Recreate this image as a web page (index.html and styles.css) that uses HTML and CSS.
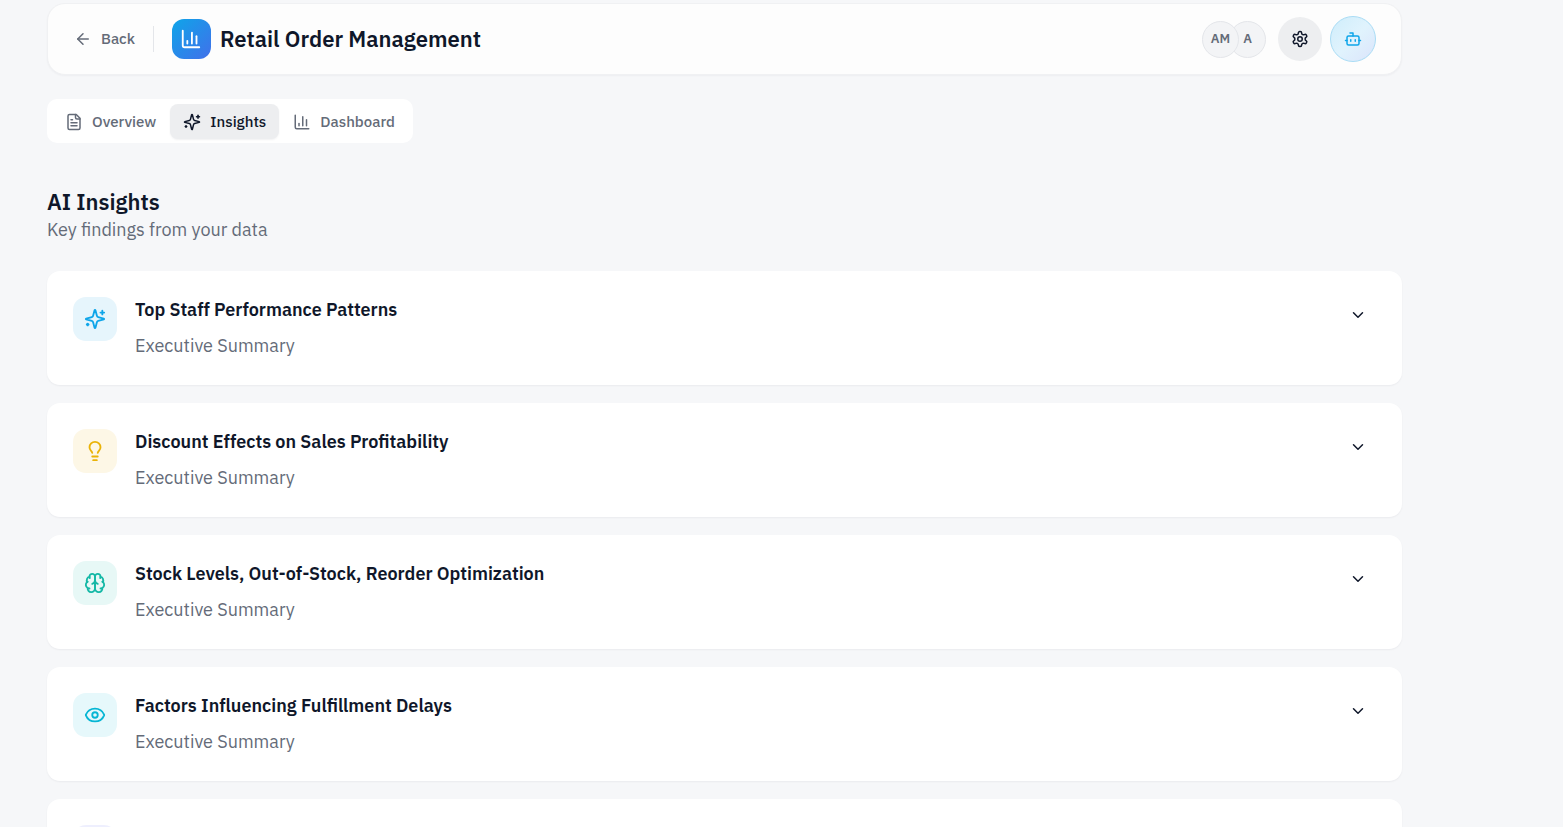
FILE: index.html
```html
<!doctype html>
<html lang="en">
	<head>
		<meta charset="utf-8">
		<title>Retail Order Management</title>
		<link rel="stylesheet" href="styles.css">
	</head>
	<body>
		<svg class="sprite" aria-hidden="true">
			<symbol id="arrow-left" viewBox="0 0 24 24"><path d="m12 19-7-7 7-7"/><path d="M19 12H5"/></symbol>
			<symbol id="chart" viewBox="0 0 24 24"><path d="M3 3v16a2 2 0 0 0 2 2h16"/><path d="M18 17V9"/><path d="M13 17V5"/><path d="M8 17v-3"/></symbol>
			<symbol id="file" viewBox="0 0 24 24"><path d="M15 2H6a2 2 0 0 0-2 2v16a2 2 0 0 0 2 2h12a2 2 0 0 0 2-2V7Z"/><path d="M14 2v4a2 2 0 0 0 2 2h4"/><path d="M10 9H8"/><path d="M16 13H8"/><path d="M16 17H8"/></symbol>
			<symbol id="sparkles" viewBox="0 0 24 24"><path d="M9.937 15.5A2 2 0 0 0 8.5 14.063l-6.135-1.582a.5.5 0 0 1 0-.962L8.5 9.936A2 2 0 0 0 9.937 8.5l1.582-6.135a.5.5 0 0 1 .963 0L14.063 8.5A2 2 0 0 0 15.5 9.937l6.135 1.581a.5.5 0 0 1 0 .964L15.5 14.063a2 2 0 0 0-1.437 1.437l-1.582 6.135a.5.5 0 0 1-.963 0z"/><path d="M20 3v4"/><path d="M22 5h-4"/><path d="M4 17v2"/><path d="M5 18H3"/></symbol>
			<symbol id="settings" viewBox="0 0 24 24"><path d="M12.22 2h-.44a2 2 0 0 0-2 2v.18a2 2 0 0 1-1 1.73l-.43.25a2 2 0 0 1-2 0l-.15-.08a2 2 0 0 0-2.73.73l-.22.38a2 2 0 0 0 .73 2.73l.15.1a2 2 0 0 1 1 1.72v.51a2 2 0 0 1-1 1.74l-.15.09a2 2 0 0 0-.73 2.73l.22.38a2 2 0 0 0 2.73.73l.15-.08a2 2 0 0 1 2 0l.43.25a2 2 0 0 1 1 1.73V20a2 2 0 0 0 2 2h.44a2 2 0 0 0 2-2v-.18a2 2 0 0 1 1-1.73l.43-.25a2 2 0 0 1 2 0l.15.08a2 2 0 0 0 2.73-.73l.22-.39a2 2 0 0 0-.73-2.73l-.15-.08a2 2 0 0 1-1-1.74v-.5a2 2 0 0 1 1-1.74l.15-.09a2 2 0 0 0 .73-2.73l-.22-.38a2 2 0 0 0-2.73-.73l-.15.08a2 2 0 0 1-2 0l-.43-.25a2 2 0 0 1-1-1.73V4a2 2 0 0 0-2-2z"/><circle cx="12" cy="12" r="3"/></symbol>
			<symbol id="bot" viewBox="0 0 24 24"><path d="M12 8V4H8"/><rect width="16" height="12" x="4" y="8" rx="2"/><path d="M2 14h2"/><path d="M20 14h2"/><path d="M15 13v2"/><path d="M9 13v2"/></symbol>
			<symbol id="chevron" viewBox="0 0 24 24"><path d="m6 9 6 6 6-6"/></symbol>
			<symbol id="bulb" viewBox="0 0 24 24"><path d="M15 14c.2-1 .7-1.700 1.500-2.500 1-.9 1.500-2.200 1.500-3.500A6 6 0 0 0 6 8c0 1 .2 2.200 1.500 3.500.7.7 1.300 1.500 1.500 2.500"/><path d="M9 18h6"/><path d="M10 22h4"/></symbol>
			<symbol id="brain" viewBox="0 0 24 24"><path d="M12 5a3 3 0 1 0-5.997.125 4 4 0 0 0-2.526 5.77 4 4 0 0 0 .556 6.588A4 4 0 1 0 12 18Z"/><path d="M12 5a3 3 0 1 1 5.997.125 4 4 0 0 1 2.526 5.77 4 4 0 0 1-.556 6.588A4 4 0 1 1 12 18Z"/><path d="M15 13a4.500 4.500 0 0 1-3-4 4.500 4.500 0 0 1-3 4"/><path d="M17.599 6.500a3 3 0 0 0 .399-1.375"/><path d="M6.003 5.125A3 3 0 0 0 6.401 6.500"/><path d="M3.477 10.896a4 4 0 0 1 .585-.396"/><path d="M19.938 10.500a4 4 0 0 1 .585.396"/><path d="M6 18a4 4 0 0 1-1.967-.516"/><path d="M19.967 17.484A4 4 0 0 1 18 18"/></symbol>
			<symbol id="eye" viewBox="0 0 24 24"><path d="M2.062 12.348a1 1 0 0 1 0-.696 10.75 10.75 0 0 1 19.876 0 1 1 0 0 1 0 .696 10.75 10.75 0 0 1-19.876 0"/><circle cx="12" cy="12" r="3"/></symbol>
		</svg>
		<div class="page">
			<header class="topbar">
				<a class="back" href="#"><svg class="icon"><use href="#arrow-left"/></svg>Back</a>
				<div class="logo"><svg class="icon icon-lg"><use href="#chart"/></svg></div>
				<h1>Retail Order Management</h1>
				<div class="avatars">
					<span class="avatar avatar-top">AM</span>
					<span class="avatar">A</span>
				</div>
				<button class="round" type="button" aria-label="Settings"><svg class="icon"><use href="#settings"/></svg></button>
				<button class="round assistant" type="button" aria-label="Assistant"><svg class="icon"><use href="#bot"/></svg></button>
			</header>
			<nav class="tabs">
				<a class="tab" href="#"><svg class="icon"><use href="#file"/></svg>Overview</a>
				<a class="tab active" href="#"><svg class="icon"><use href="#sparkles"/></svg>Insights</a>
				<a class="tab" href="#"><svg class="icon"><use href="#chart"/></svg>Dashboard</a>
			</nav>
			<main>
				<h2>AI Insights</h2>
				<p class="lead">Key findings from your data</p>
				<div class="cards">
					<section class="card">
						<div class="tile sky"><svg class="icon icon-lg"><use href="#sparkles"/></svg></div>
						<div class="text">
							<h3>Top Staff Performance Patterns</h3>
							<p>Executive Summary</p>
						</div>
						<button class="toggle" type="button" aria-label="Expand"><svg class="icon"><use href="#chevron"/></svg></button>
					</section>
					<section class="card">
						<div class="tile yellow"><svg class="icon icon-lg"><use href="#bulb"/></svg></div>
						<div class="text">
							<h3>Discount Effects on Sales Profitability</h3>
							<p>Executive Summary</p>
						</div>
						<button class="toggle" type="button" aria-label="Expand"><svg class="icon"><use href="#chevron"/></svg></button>
					</section>
					<section class="card">
						<div class="tile teal"><svg class="icon icon-lg"><use href="#brain"/></svg></div>
						<div class="text">
							<h3>Stock Levels, Out-of-Stock, Reorder Optimization</h3>
							<p>Executive Summary</p>
						</div>
						<button class="toggle" type="button" aria-label="Expand"><svg class="icon"><use href="#chevron"/></svg></button>
					</section>
					<section class="card">
						<div class="tile cyan"><svg class="icon icon-lg"><use href="#eye"/></svg></div>
						<div class="text">
							<h3>Factors Influencing Fulfillment Delays</h3>
							<p>Executive Summary</p>
						</div>
						<button class="toggle" type="button" aria-label="Expand"><svg class="icon"><use href="#chevron"/></svg></button>
					</section>
					<section class="card">
						<div class="tile indigo"></div>
					</section>
				</div>
			</main>
		</div>
	</body>
</html>
```

FILE: styles.css
```css
* {
	box-sizing: border-box;
}
body {
	margin: 0;
	background: #f6f7f9;
	color: #0f172a;
	font-family: "IBM Plex Sans", "Noto Sans", sans-serif;
	font-size: 18px;
	line-height: 26px;
}
h1, h2, h3, p {
	margin: 0;
}
a {
	color: inherit;
	text-decoration: none;
}
button {
	border: 0;
	padding: 0;
	color: inherit;
	font: inherit;
	cursor: pointer;
}
.sprite {
	display: none;
}
.icon {
	width: 18px;
	height: 18px;
	flex-shrink: 0;
	fill: none;
	stroke: currentColor;
	stroke-width: 2;
	stroke-linecap: round;
	stroke-linejoin: round;
}
.icon-lg {
	width: 22px;
	height: 22px;
}
.page {
	height: 100vh;
	padding: 3px 161px 0 47px;
	overflow: hidden;
}

.topbar {
	display: flex;
	align-items: center;
	height: 72px;
	padding: 0 25px 0 26px;
	border: 1px solid #f0f1f3;
	border-radius: 18px;
	background: #fdfdfd;
	box-shadow: 0 1px 2px rgba(15, 23, 42, .04);
}
.back {
	display: flex;
	align-items: center;
	gap: 9px;
	padding-right: 18px;
	border-right: 1px solid #e4e6ea;
	color: #646b78;
	font-size: 15px;
	font-weight: 500;
}
.logo {
	display: flex;
	align-items: center;
	justify-content: center;
	width: 39px;
	height: 40px;
	margin: 0 9px 0 18px;
	border-radius: 12px;
	background: linear-gradient(135deg, #0ea5e9, #4170ea);
	color: #fff;
}
h1 {
	flex: 1;
	font-size: 22px;
	font-weight: 600;
}
.avatars {
	display: flex;
	margin-right: 12px;
}
.avatar {
	display: flex;
	align-items: center;
	justify-content: center;
	width: 37px;
	height: 37px;
	margin-left: -10px;
	border: 1px solid #e4e6ea;
	border-radius: 50%;
	background: #f3f4f6;
	color: #646b78;
	font-size: 13px;
	font-weight: 600;
}
.avatar-top {
	z-index: 1;
}
.round {
	display: flex;
	align-items: center;
	justify-content: center;
	width: 44px;
	height: 44px;
	border-radius: 50%;
	background: #edeef0;
}
.assistant {
	width: 46px;
	height: 46px;
	margin-left: 8px;
	border: 1px solid #a9dcf5;
	background: linear-gradient(135deg, #cfedfb, #e0f3fd 50%, #dbe4fb);
	color: #0ea5e9;
}

.tabs {
	display: inline-flex;
	gap: 1px;
	margin-top: 24px;
	padding: 5px 5px 4px;
	border-radius: 10px;
	background: #fff;
}
.tab {
	display: flex;
	align-items: center;
	gap: 9px;
	height: 35px;
	padding: 0 13px;
	border-radius: 8px;
	color: #646b78;
	font-size: 15px;
	font-weight: 500;
}
.active {
	background: #edeef0;
	box-shadow: 0 1px 2px rgba(15, 23, 42, .06);
	color: #0f172a;
}

main {
	margin-top: 44px;
}
h2 {
	font-size: 22px;
	font-weight: 600;
	line-height: 30px;
}
.lead {
	color: #646b78;
}
.cards {
	display: flex;
	flex-direction: column;
	gap: 18px;
	margin-top: 28px;
}
.card {
	display: flex;
	align-items: flex-start;
	gap: 18px;
	min-height: 114px;
	padding: 26px;
	border-radius: 13px;
	background: #fff;
	box-shadow: 0 1px 2px rgba(15, 23, 42, .05);
}
.tile {
	display: flex;
	align-items: center;
	justify-content: center;
	width: 44px;
	height: 44px;
	border-radius: 13px;
}
.sky {
	background: #e6f5fc;
	color: #0ea5e9;
}
.yellow {
	background: #fdf7e6;
	color: #eab308;
}
.teal {
	background: #e7f8f6;
	color: #14b8a6;
}
.cyan {
	background: #e6f8fb;
	color: #06b6d4;
}
.indigo {
	background: #eeeffe;
}
.text {
	flex: 1;
}
h3 {
	margin-bottom: 10px;
	font-size: 18px;
	font-weight: 600;
}
.text p {
	color: #646b78;
}
.toggle {
	display: flex;
	align-items: center;
	justify-content: center;
	width: 36px;
	height: 36px;
	background: none;
}
```
